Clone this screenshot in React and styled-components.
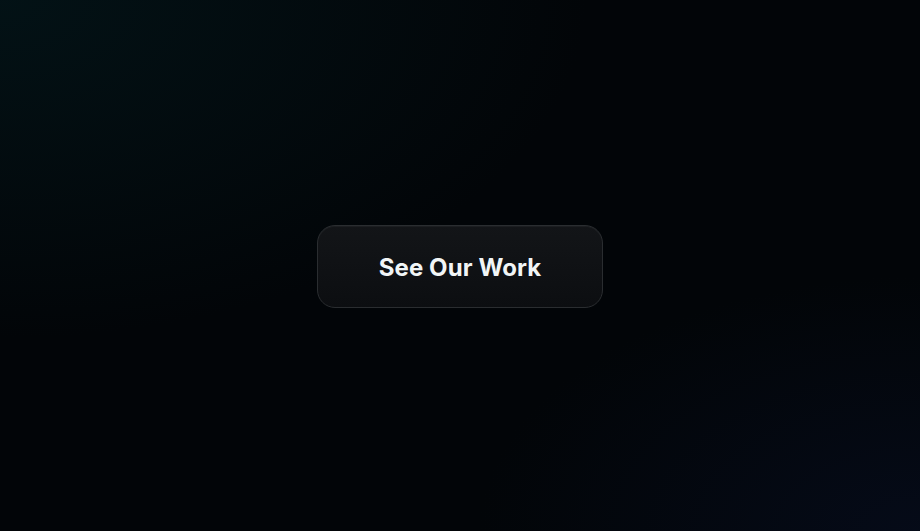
import React from 'react';
import styled, { createGlobalStyle } from 'styled-components';

const GlobalStyle = createGlobalStyle`
  html, body, #root {
    margin: 0;
    height: 100%;
  }
  body {
    background: #020608;
    font-family: Inter, 'Noto Sans', sans-serif;
  }
`;

const Stage = styled.main`
  display: flex;
  align-items: center;
  justify-content: center;
  height: 100vh;
  background:
    radial-gradient(ellipse 85% 85% at 0% 0%, rgba(3, 20, 24, 0.85), transparent 75%),
    radial-gradient(ellipse 60% 60% at 100% 100%, rgba(6, 12, 28, 0.8), transparent 80%),
    #020508;
`;

const WorkButton = styled.button`
  width: 286px;
  height: 83px;
  margin-top: 2px;
  padding: 1px 0 0;
  border-radius: 18px;
  border: 1px solid #2a2d30;
  background: linear-gradient(180deg, #131518 0%, #0c0e11 100%);
  box-shadow: inset 0 1px 0 rgba(255, 255, 255, 0.04);
  color: #f1f5f6;
  font-family: Inter, 'Noto Sans', sans-serif;
  font-size: 24px;
  font-weight: 700;
  letter-spacing: 0.1px;
  cursor: pointer;
`;

export default function App() {
  return (
    <>
      <GlobalStyle />
      <Stage>
        <WorkButton>See Our Work</WorkButton>
      </Stage>
    </>
  );
}
